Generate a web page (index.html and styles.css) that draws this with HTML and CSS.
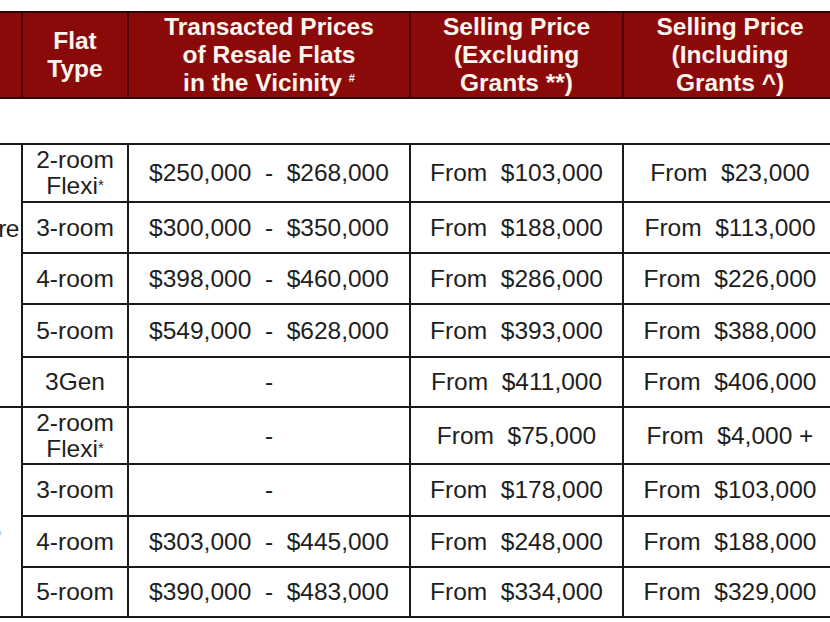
FILE: index.html
```html
<!DOCTYPE html>
<html lang="en">
<head>
<meta charset="utf-8">
<title>Flat prices</title>
<link rel="stylesheet" href="styles.css">
</head>
<body>
<div class="page">
  <div class="head">
    <div class="hc"></div>
    <div class="hc"><div>Flat<br>Type</div></div>
    <div class="hc"><div>Transacted Prices<br>of Resale Flats<br>in the Vicinity <sup class="hash">#</sup></div></div>
    <div class="hc"><div>Selling Price<br>(Excluding<br>Grants **)</div></div>
    <div class="hc"><div>Selling Price<br>(Including<br>Grants ^)</div></div>
  </div>

  <div class="grid">
    <div class="grp g1"><div class="lbl">re</div></div>
    <div class="grp g2"><div class="lbl2">e</div></div>

    <div class="c"><div>2-room<br>Flexi<span class="ast">*</span></div></div>
    <div class="c">$250,000  -  $268,000</div>
    <div class="c">From  $103,000</div>
    <div class="c">From  $23,000</div>

    <div class="c">3-room</div>
    <div class="c">$300,000  -  $350,000</div>
    <div class="c">From  $188,000</div>
    <div class="c">From  $113,000</div>

    <div class="c">4-room</div>
    <div class="c">$398,000  -  $460,000</div>
    <div class="c">From  $286,000</div>
    <div class="c">From  $226,000</div>

    <div class="c">5-room</div>
    <div class="c">$549,000  -  $628,000</div>
    <div class="c">From  $393,000</div>
    <div class="c">From  $388,000</div>

    <div class="c">3Gen</div>
    <div class="c">-</div>
    <div class="c">From  $411,000</div>
    <div class="c">From  $406,000</div>

    <div class="c"><div>2-room<br>Flexi<span class="ast">*</span></div></div>
    <div class="c">-</div>
    <div class="c">From  $75,000</div>
    <div class="c">From  $4,000 +</div>

    <div class="c">3-room</div>
    <div class="c">-</div>
    <div class="c">From  $178,000</div>
    <div class="c">From  $103,000</div>

    <div class="c">4-room</div>
    <div class="c">$303,000  -  $445,000</div>
    <div class="c">From  $248,000</div>
    <div class="c">From  $188,000</div>

    <div class="c">5-room</div>
    <div class="c">$390,000  -  $483,000</div>
    <div class="c">From  $334,000</div>
    <div class="c">From  $329,000</div>
  </div>
</div>
</body>
</html>
```
FILE: styles.css
```css
html, body {
  margin: 0;
  padding: 0;
  background: #ffffff;
  overflow: hidden;
}
.page {
  width: 838px;
  font-family: "Liberation Sans", Arial, sans-serif;
  font-size: 24.5px;
  color: #1e1e1e;
}
.head {
  margin-top: 11px;
  display: grid;
  grid-template-columns: 23px 106px 282px 213px 214px;
  height: 88px;
  box-sizing: border-box;
  border-top: 2px solid #2a0606;
  border-bottom: 2px solid #2a0606;
  background: #8a0a0a;
}
.hc {
  display: flex;
  align-items: center;
  justify-content: center;
  text-align: center;
  border-right: 2px solid #4a0000;
  color: #fff5ef;
  font-weight: bold;
  line-height: 28px;
  white-space: nowrap;
}
.hash {
  font-size: 11px;
  vertical-align: 9px;
  line-height: 0;
}
.grid {
  margin-top: 44px;
  display: grid;
  grid-template-columns: 23px 106px 282px 213px 214px;
  grid-template-rows: 58px 51px 51px 53px 50px 57px 52px 51px 50px;
  border-top: 2px solid #1a1a1a;
}
.c {
  display: flex;
  align-items: center;
  justify-content: center;
  text-align: center;
  white-space: pre;
  line-height: 26px;
  border-right: 2px solid #1a1a1a;
  border-bottom: 2px solid #1a1a1a;
}
.ast {
  font-size: 15px;
  vertical-align: 4px;
  line-height: 0;
}
.grp {
  grid-column: 1;
  border-right: 2px solid #1a1a1a;
  border-bottom: 2px solid #1a1a1a;
  overflow: hidden;
  display: flex;
  flex-direction: column;
  align-items: flex-end;
}
.g1 { grid-row: 1 / span 5; }
.g2 { grid-row: 6 / span 4; }
.lbl {
  margin-top: 58px;
  height: 49px;
  line-height: 51px;
  padding-right: 2px;
  letter-spacing: -0.5px;
  white-space: nowrap;
}
.lbl2 {
  margin-top: 112px;
  line-height: 26px;
  padding-right: 19px;
  color: #a9bbd2;
  white-space: nowrap;
}
```
